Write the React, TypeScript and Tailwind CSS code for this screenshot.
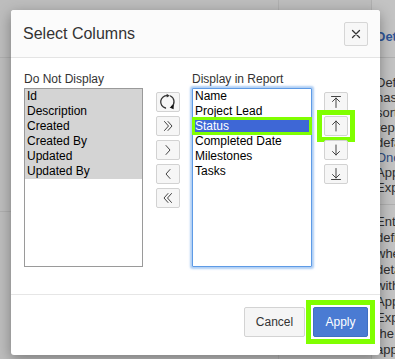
import React from "react";

const font = { fontFamily: '"Liberation Sans", Arial, sans-serif' };

const hidden = ["Id", "Description", "Created", "Created By", "Updated", "Updated By"];
const shown = ["Name", "Project Lead", "Status", "Completed Date", "Milestones", "Tasks"];

function Icon({ d, children }: { d?: string; children?: React.ReactNode }) {
  return (
    <svg width="16" height="16" viewBox="0 0 16 16" fill="none" stroke="#444" strokeWidth="1" strokeLinecap="round" strokeLinejoin="round">
      {d && <path d={d} />}
      {children}
    </svg>
  );
}

const icons: Record<string, React.ReactNode> = {
  refresh: (
    <svg width="18" height="18" viewBox="0 0 18 18" fill="none" stroke="#333" strokeWidth="1.3" strokeLinecap="round">
      <path d="M6.5 15 A6.3 6.3 0 0 1 8.5 2.6" />
      <path d="M11.5 3 A6.3 6.3 0 0 1 12.6 13.6" />
      <path d="M7.6 0.8 L10.8 2.7 L7.8 4.6 Z" fill="#333" stroke="none" />
      <path d="M14.8 11.8 L14.6 16.2 L10.6 14.4 Z" fill="#111" stroke="none" />
    </svg>
  ),
  right2: <Icon d="M4.5 3.5 L8.5 8 L4.5 12.5 M8 3.5 L12 8 L8 12.5" />,
  right: <Icon d="M6 3.5 L10 8 L6 12.5" />,
  left: <Icon d="M10 3.5 L6 8 L10 12.5" />,
  left2: <Icon d="M8 3.5 L4 8 L8 12.5 M11.5 3.5 L7.5 8 L11.5 12.5" />,
  top: <Icon d="M3.5 2.5 H12.5 M8 4 V13.5 M4.5 7.5 L8 4 L11.5 7.5" />,
  up: <Icon d="M8 3 V13 M4.5 6.5 L8 3 L11.5 6.5" />,
  down: <Icon d="M8 3 V13 M4.5 9.5 L8 13 L11.5 9.5" />,
  bottom: <Icon d="M3.5 13.5 H12.5 M8 2.5 V12 M4.5 8.5 L8 12 L11.5 8.5" />,
};

function SmallButton({ name, marked }: { name: string; marked?: boolean }) {
  return (
    <div className="relative">
      <button className="flex h-[20px] w-[24px] items-center justify-center rounded-[2px] border border-[#d2d2d2] bg-[#f6f6f6]">
        {icons[name]}
      </button>
      {marked && <span className="pointer-events-none absolute -inset-x-[7px] -inset-y-[6px] border-[5px] border-[#80ff00]" />}
    </div>
  );
}

export default function App() {
  return (
    <div className="relative h-[359px] w-[395px] overflow-hidden bg-[#bdbdbd] text-[12px] text-[#2e2e2e]" style={font}>
      {/* page behind the modal */}
      <div className="flex h-full">
        <div className="flex w-[279px] flex-col border-r border-[#b0b0b0]">
          <div className="h-[58px] border-b border-[#afafaf]" />
          <div className="h-[154px] border-b border-[#afafaf]" />
        </div>
        <div className="flex w-[93px] flex-col border-r border-[#b0b0b0]">
          <div className="h-[58px] border-b border-[#afafaf]" />
        </div>
        <div className="flex-1 overflow-hidden whitespace-nowrap bg-[#c3c3c3] pl-[4px] text-[13px] leading-[15px]">
          <div className="flex h-[58px] items-center border-b border-[#afafaf] pt-[16px] font-bold text-[#2f5698]">Details</div>
          <div className="pt-[17px]">
            <div>Defines</div>
            <div>has</div>
            <div>sort</div>
            <div>report</div>
            <div>default</div>
            <div className="text-[#2f4d80]">Once</div>
            <div>Apply</div>
            <div>Export</div>
          </div>
          <div className="mt-[9px] border-t border-[#b0b0b0] pt-[9px] leading-[16px]">
            <div>Enter</div>
            <div>defines</div>
            <div>when</div>
            <div>detail</div>
            <div>with</div>
            <div>Apply</div>
            <div>Export</div>
            <div>the</div>
            <div>apply</div>
          </div>
        </div>
      </div>

      {/* modal dialog */}
      <div className="absolute left-[11px] top-[10px] flex h-[345px] w-[369px] flex-col rounded-[3px] bg-white shadow-[0_4px_14px_rgba(0,0,0,0.35)]">
        <div className="flex h-[48px] items-center justify-between rounded-t-[3px] border-b border-[#e4e4e4] bg-[#fbfbfb] pl-[12px] pr-[12px]">
          <h1 className="text-[16px] text-[#333]">Select Columns</h1>
          <button className="flex h-[24px] w-[24px] items-center justify-center rounded-[2px] border border-[#d6d6d6] bg-[#f7f7f7]">
            <svg width="10" height="10" viewBox="0 0 10 10" stroke="#333" strokeWidth="1.3" strokeLinecap="round">
              <path d="M1.5 1.5 L8.5 8.5 M8.5 1.5 L1.5 8.5" />
            </svg>
          </button>
        </div>

        <div className="flex h-[236px] items-start pl-[13px] pt-[14px]">
          <div className="flex w-[119px] flex-col">
            <div className="mb-[1px] h-[15px] leading-[15px] text-[#333]">Do Not Display</div>
            <div className="h-[179px] border border-[#9a9a9a] bg-white">
              {hidden.map((c) => (
                <div key={c} className="h-[15px] bg-[#d4d4d4] pl-[2px] text-[12px] leading-[15px] text-black">{c}</div>
              ))}
            </div>
          </div>

          <div className="ml-[13px] mt-[20px] flex flex-col gap-[4px]">
            <SmallButton name="refresh" />
            <SmallButton name="right2" />
            <SmallButton name="right" />
            <SmallButton name="left" />
            <SmallButton name="left2" />
          </div>

          <div className="ml-[12px] flex w-[120px] flex-col">
            <div className="mb-[1px] h-[15px] leading-[15px] text-[#333]">Display in Report</div>
            <div className="h-[179px] rounded-[1px] border border-[#5e9be6] bg-white shadow-[0_0_2px_2px_rgba(110,165,235,0.55)]">
              {shown.map((c) => (
                <div
                  key={c}
                  className={
                    c === "Status"
                      ? "relative h-[15px] bg-[#3e67d6] pl-[2px] leading-[15px] text-white"
                      : "h-[15px] pl-[2px] leading-[15px] text-black"
                  }
                >
                  {c}
                  {c === "Status" && (
                    <span className="pointer-events-none absolute -bottom-[1px] -left-[1px] -right-[1px] -top-[2px] border-[3px] border-[#80ff00]" />
                  )}
                </div>
              ))}
            </div>
          </div>

          <div className="ml-[12px] mt-[20px] flex flex-col gap-[4px]">
            <SmallButton name="top" />
            <SmallButton name="up" marked />
            <SmallButton name="down" />
            <SmallButton name="bottom" />
          </div>
        </div>

        <div className="flex flex-1 items-start justify-end gap-[8px] border-t border-[#e6e6e6] pr-[12px] pt-[12px]">
          <button className="h-[30px] w-[61px] rounded-[2px] border border-[#d3d3d3] bg-[#f5f5f5] text-[12px] text-[#333]">Cancel</button>
          <div className="relative">
            <button className="h-[30px] w-[55px] rounded-[2px] border border-[#3f6fc4] bg-[#4a7bd3] text-[12px] text-white">Apply</button>
            <span className="pointer-events-none absolute -inset-[7px] border-[5px] border-[#80ff00]" />
          </div>
        </div>
      </div>
    </div>
  );
}
